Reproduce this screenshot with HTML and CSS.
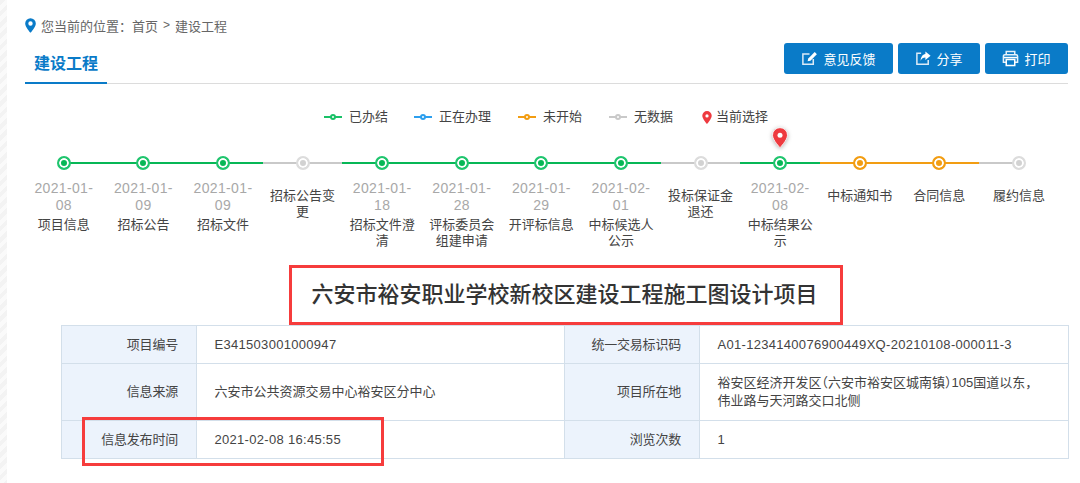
FILE: index.html
```html
<!DOCTYPE html>
<html lang="zh-CN">
<head>
<meta charset="utf-8">
<title>建设工程</title>
<link rel="stylesheet" href="styles.css">
</head>
<body>
<div class="page">
  <div class="crumb">
    <svg class="crumb-pin" viewBox="0 0 12 16" width="11" height="15"><path fill="#0a7bc8" fill-rule="evenodd" d="M6 0a5.8 5.8 0 0 0-5.8 5.8C.2 9.6 6 16 6 16s5.800-6.400 5.800-10.200A5.800 5.800 0 0 0 6 0zm0 3.400a2.400 2.400 0 1 1 0 4.800 2.400 2.400 0 0 1 0-4.800z"/></svg>
    <span>您当前的位置：首页</span><span class="crumb-sep">&gt;</span><span>建设工程</span>
  </div>
  <div class="tabbar">
    <div class="tab">建设工程</div>
    <div class="actions">
      <a class="btn btn-a"><svg viewBox="0 0 18 18" width="17" height="17"><path fill="none" stroke="#dbeaf6" stroke-width="1.600" d="M13 9.500V15.200H2V4.200H9"/><path fill="#fff" d="M7 12l.7-3L14.500 2.200l2.300 2.300L10 11.300z"/></svg>意见反馈</a>
      <a class="btn btn-b"><svg viewBox="0 0 18 18" width="17" height="17"><path fill="none" stroke="#dbeaf6" stroke-width="1.600" d="M14 10.500V15.200H2V3.500H6.500"/><path fill="#fff" d="M11 1.500l5.500 4.500-5.500 4.500V8C8.500 8 7 9 6 11.500 6 7.500 8 4.500 11 4.200z"/></svg>分享</a>
      <a class="btn btn-c"><svg viewBox="0 0 18 18" width="17" height="17"><path fill="none" stroke="#e6f1f9" stroke-width="1.600" d="M4.500 5V1.500h9V5M4.500 13H1.500V6.500a1.500 1.500 0 0 1 1.500-1.500h12a1.500 1.500 0 0 1 1.500 1.500V13H13.500"/><path fill="none" stroke="#fff" stroke-width="1.600" d="M4.500 10h9v6.500h-9z"/><path stroke="#fff" stroke-width="1.600" d="M2 8h14"/></svg>打印</a>
    </div>
  </div>

  <div class="legend">
    <span class="key key-a"><i class="key-line line-green"><b></b></i>已办结</span>
    <span class="key key-b"><i class="key-line line-blue"><b></b></i>正在办理</span>
    <span class="key key-c"><i class="key-line line-orange"><b></b></i>未开始</span>
    <span class="key key-d"><i class="key-line line-gray"><b></b></i>无数据</span>
    <span class="key key-e"><svg viewBox="0 0 12 16" width="10" height="13"><path fill="#ee3a3f" fill-rule="evenodd" d="M6 0a5.800 5.800 0 0 0-5.800 5.800C.2 9.600 6 16 6 16s5.800-6.400 5.800-10.200A5.800 5.800 0 0 0 6 0zm0 4a2 2 0 1 1 0 4 2 2 0 0 1 0-4z"/></svg>当前选择</span>
  </div>

  <ol class="timeline">
    <li class="step green first"><span class="dot"></span><span class="date">2021-01-08</span><span class="name">项目信息</span></li>
    <li class="step green"><span class="dot"></span><span class="date">2021-01-09</span><span class="name">招标公告</span></li>
    <li class="step green"><span class="dot"></span><span class="date">2021-01-09</span><span class="name">招标文件</span></li>
    <li class="step gray nodate"><span class="dot"></span><span class="name">招标公告变更</span></li>
    <li class="step green"><span class="dot"></span><span class="date">2021-01-18</span><span class="name">招标文件澄清</span></li>
    <li class="step green"><span class="dot"></span><span class="date">2021-01-28</span><span class="name">评标委员会组建申请</span></li>
    <li class="step green"><span class="dot"></span><span class="date">2021-01-29</span><span class="name">开评标信息</span></li>
    <li class="step green"><span class="dot"></span><span class="date">2021-02-01</span><span class="name">中标候选人公示</span></li>
    <li class="step gray nodate"><span class="dot"></span><span class="name">投标保证金退还</span></li>
    <li class="step green"><svg class="current" viewBox="0 0 24 30" width="20" height="25"><path fill="#ee3a3f" stroke="#fff" stroke-width="1" d="M12 2a9 9 0 0 0-9 9c0 6 9 15 9 15s9-9 9-15a9 9 0 0 0-9-9z"/><circle cx="12" cy="11" r="3" fill="#fff"/></svg><span class="dot"></span><span class="date">2021-02-08</span><span class="name">中标结果公示</span></li>
    <li class="step orange nodate"><span class="dot"></span><span class="name">中标通知书</span></li>
    <li class="step orange nodate"><span class="dot"></span><span class="name">合同信息</span></li>
    <li class="step gray nodate last"><span class="dot"></span><span class="name">履约信息</span></li>
  </ol>

  <div class="title-row"><h1 class="title">六安市裕安职业学校新校区建设工程施工图设计项目</h1></div>

  <div class="table-wrap">
    <table class="info">
      <colgroup><col class="c1"><col class="c2"><col class="c3"><col class="c4"></colgroup>
      <tr class="r1">
        <th>项目编号</th><td>E341503001000947</td>
        <th>统一交易标识码</th><td>A01-1234140076900449XQ-20210108-000011-3</td>
      </tr>
      <tr class="r2">
        <th>信息来源</th><td class="cjk">六安市公共资源交易中心裕安区分中心</td>
        <th>项目所在地</th><td class="cjk">裕安区经济开发区（六安市裕安区城南镇）105国道以东，伟业路与天河路交口北侧</td>
      </tr>
      <tr class="r3">
        <th>信息发布时间</th><td>2021-02-08 16:45:55</td>
        <th>浏览次数</th><td>1</td>
      </tr>
    </table>
    <div class="mark"></div>
  </div>
</div>
</body>
</html>
```
FILE: styles.css
```css
* { box-sizing: border-box; }
html, body { margin: 0; padding: 0; height: 483px; overflow: hidden; background: #fff; }
body {
  font-family: "Liberation Sans", "Noto Sans CJK SC", sans-serif;
  font-size: 13px;
  color: #444;
}
.page {
  height: 483px;
  padding: 0 12px 0 25px;
  background:
    repeating-linear-gradient(135deg, #f3f3f3 0 4px, #fafafa 4px 8px) left top / 7px 100% no-repeat,
    #fff;
}
.crumb { display: flex; align-items: center; height: 18px; margin-top: 16px; position: absolute; color: #666; }
.crumb-pin { margin-right: 5px; }
.crumb-sep { margin: 0 5px 0 5px; font-size: 12px; }
.tabbar {
  display: flex;
  justify-content: space-between;
  height: 84px;
  align-items: flex-end;
  border-bottom: 1px solid #dcdcdc;
}
.tab {
  width: 82px;
  height: 34px;
  margin-bottom: -1px;
  padding-left: 9px;
  border-bottom: 2px solid #0a7bc8;
  color: #0a7bc8;
  font-size: 16px;
  font-weight: 700;
  line-height: 28px;
}
.actions { display: flex; gap: 5px; align-self: flex-start; margin-top: 43px; }
.btn {
  display: flex;
  align-items: center;
  justify-content: center;
  gap: 5px;
  height: 31px;
  border-radius: 3px;
  background: #0a7bc8;
  color: #fff;
  font-size: 13px;
}
.btn-a { width: 109px; }
.btn-b { width: 82px; gap: 4px; }
.btn-c { width: 83px; }

.legend { display: flex; height: 20px; margin-top: 23px; padding-left: 299px; align-items: center; line-height: 20px; }
.key { display: inline-flex; align-items: center; }
.key-a { width: 90px; }
.key-b { width: 104px; }
.key-c { width: 91px; }
.key-d { width: 92px; }
.key-e { margin-left: 1px; }
.key-e svg { margin-right: 4px; }
.key-line { position: relative; display: block; width: 18px; height: 2px; margin-right: 7px; }
.key-line b {
  position: absolute; left: 6px; top: -2px;
  width: 6px; height: 6px; border-radius: 50%;
  background: #fff; border: 2px solid currentColor;
}
.line-green { background: #19c167; color: #19c167; }
.line-blue { background: #2d9fee; color: #2d9fee; }
.line-orange { background: #f29d12; color: #f29d12; }
.line-gray { background: #c9c9c9; color: #c9c9c9; }

.timeline {
  display: grid;
  grid-template-columns: repeat(13, 79.6px);
  margin: 0;
  padding: 0;
  list-style: none;
  height: 137px;
  margin-left: -1px;
  padding-top: 28px;
}
.step {
  position: relative;
  display: flex;
  flex-direction: column;
  align-items: center;
  text-align: center;
  padding: 25px 4px 0;
}
.step::before {
  content: "";
  position: absolute;
  left: 0; right: 0; top: 7px;
  height: 2px;
  background: var(--c);
}
.first::before { left: 50%; }
.last::before { right: 50%; }
.green { --c: #07b756; }
.gray { --c: #c9c9c9; }
.orange { --c: #f29d12; }
.dot {
  position: absolute;
  left: 50%; top: 1px;
  width: 14px; height: 14px;
  margin-left: -7px;
  border-radius: 50%;
  background: var(--c);
  border: 2px solid var(--c);
  box-shadow: inset 0 0 0 2px #fff;
}
.gray .dot { background: #d2d2d2; border-color: #dcdcdc; }
.green .dot { background: #07b756; border-color: #1fc56e; }
.current { position: absolute; left: 50%; top: -29px; margin-left: -10px; filter: drop-shadow(0 1px 2px rgba(0,0,0,.3)); }
.date {
  width: 66px;
  color: #a8a8a8;
  font-size: 14px;
  line-height: 17px;
  letter-spacing: .35px;
}
.name { color: #444; font-size: 13px; line-height: 16px; margin-top: 3px; width: 67px; }
.nodate { padding-top: 30px; }

.title-row { display: flex; margin-top: 1px; }
.title {
  width: 554px;
  height: 60px;
  margin: 0 0 0 264px;
  padding-right: 3px;
  border: 3px solid #f63c3c;
  color: #333;
  font-size: 22px;
  font-weight: 500;
  line-height: 54px;
  text-align: center;
}
.table-wrap { position: relative; margin-left: 36px; }
.info { width: 1007px; table-layout: fixed; border-collapse: collapse; }
.c1, .c3 { width: 135px; }
.c2 { width: 368px; }
.c4 { width: 369px; }
.info th, .info td { border: 1px solid #d3dfea; padding: 0; font-size: 13px; font-weight: 400; line-height: 18px; }
.info th { background: #ecf3fc; text-align: right; padding-right: 18px; letter-spacing: -.2px; }
.info td { padding: 0 17px 0 17.5px; letter-spacing: .3px; }
.info td.cjk { padding-right: 30px; letter-spacing: 0; font-feature-settings: "halt"; }
.info tr.r1 { height: 38px; }
.info tr.r2 { height: 57px; }
.info tr.r3 { height: 38px; }
.mark {
  position: absolute;
  left: 21px; top: 92px;
  width: 302px; height: 49px;
  border: 3px solid #f63c3c;
}
```
